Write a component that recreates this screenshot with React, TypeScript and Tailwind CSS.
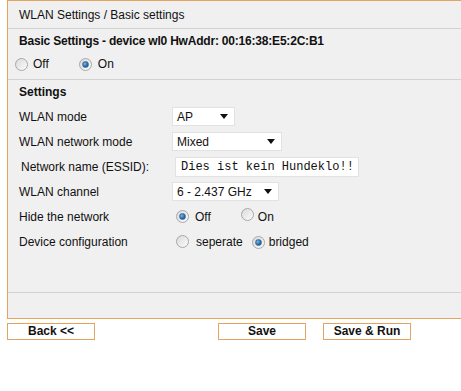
import { ReactNode } from 'react';

const Radio = ({ checked = false }: { checked?: boolean }) => (
  <span className="inline-flex items-center justify-center w-[13px] h-[13px] rounded-full border border-[#a8a8a8] bg-gradient-to-br from-[#dadada] to-[#fcfcfc] shrink-0">
    {checked && (
      <span className="block w-[7px] h-[7px] rounded-full bg-[radial-gradient(circle_at_35%_35%,#7fb4e6,#1c5a96_70%)] border border-[#3a6f9f]" />
    )}
  </span>
);

const Select = ({ value, width }: { value: string; width: string }) => (
  <div className={`flex items-center justify-between h-[19px] bg-white border border-[#e2e2e2] pl-[4px] pr-[6px] ${width}`}>
    <span>{value}</span>
    <svg width="8" height="5" viewBox="0 0 8 5">
      <path d="M0 0h8L4 5z" fill="#111" />
    </svg>
  </div>
);

const Row = ({ label, children, indent = false }: { label: string; children: ReactNode; indent?: boolean }) => (
  <div className="flex items-center h-[25px]">
    <div className={`w-[153px] shrink-0 ${indent ? 'pl-[2px]' : ''}`}>{label}</div>
    {children}
  </div>
);

export default function App() {
  return (
    <div className="bg-white w-[461px] h-[391px] font-['Liberation_Sans',Arial,sans-serif] text-[12px] text-[#111] leading-[16px]">
      <div className="ml-[7px] w-[454px] border border-r-0 border-[#e2a460] bg-[#f0f0f0]">
        <div className="h-[28px] pt-[6px] pl-[11px] border-b border-[#d2d2d2]">
          WLAN Settings / Basic settings
        </div>
        <div className="pl-[11px] pt-[4px] pb-[7px] border-b border-[#d2d2d2]">
          <div className="font-bold h-[16px] tracking-[-0.2px]">Basic Settings - device wl0 HwAddr: 00:16:38:E5:2C:B1</div>
          <div className="flex items-center h-[16px] mt-[7px] -ml-[4px]">
            <Radio />
            <span className="ml-[5px]">Off</span>
            <span className="ml-[30px]"><Radio checked /></span>
            <span className="ml-[6px]">On</span>
          </div>
        </div>
        <div className="pl-[11px] pt-[4px] border-b border-[#d2d2d2] h-[213px]">
          <div className="font-bold h-[16px]">Settings</div>
          <div className="mt-[4px]">
            <Row label="WLAN mode">
              <Select value="AP" width="w-[63px]" />
            </Row>
            <Row label="WLAN network mode">
              <Select value="Mixed" width="w-[110px]" />
            </Row>
            <Row label="Network name (ESSID):" indent>
              <div className="ml-[3px] w-[184px] h-[20px] bg-white border border-[#e2e2e2] flex items-center pl-[5px] font-['Liberation_Mono','Courier_New',monospace] text-[12px]">
                Dies ist kein Hundeklo!!
              </div>
            </Row>
            <Row label="WLAN channel">
              <Select value="6 - 2.437 GHz" width="w-[107px]" />
            </Row>
            <Row label="Hide the network">
              <div className="flex items-center ml-[4px]">
                <Radio checked />
                <span className="ml-[6px]">Off</span>
                <span className="ml-[30px]"><Radio /></span>
                <span className="ml-[4px]">On</span>
              </div>
            </Row>
            <Row label="Device configuration">
              <div className="flex items-center ml-[4px]">
                <Radio />
                <span className="ml-[7px]">seperate</span>
                <span className="ml-[9px]"><Radio checked /></span>
                <span className="ml-[4px]">bridged</span>
              </div>
            </Row>
          </div>
        </div>
        <div className="h-[25px]" />
      </div>
      <div className="flex mt-[4px] font-bold">
        <button className="ml-[7px] w-[88px] h-[17px] bg-white border border-[#e2a460] leading-[15px]">Back &lt;&lt;</button>
        <button className="ml-[123px] w-[88px] h-[17px] bg-white border border-[#e2a460] leading-[15px]">Save</button>
        <button className="ml-[17px] w-[88px] h-[17px] bg-white border border-[#e2a460] leading-[15px]">Save &amp; Run</button>
      </div>
    </div>
  );
}
